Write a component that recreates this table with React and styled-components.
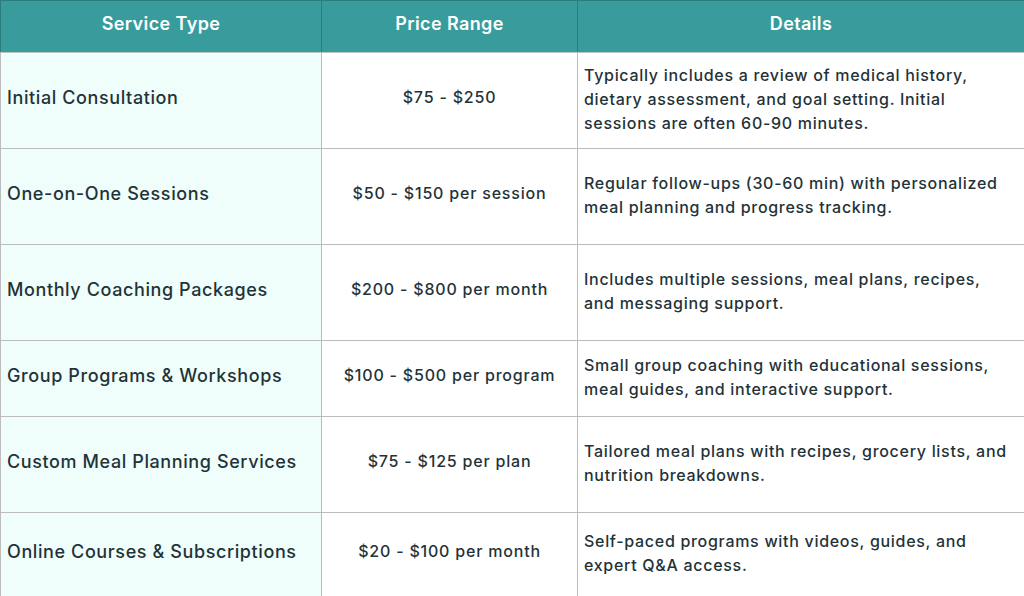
import React from "react";
import styled, { createGlobalStyle } from "styled-components";

const GlobalStyle = createGlobalStyle`
  html, body {
    margin: 0;
    padding: 0;
    background: #ffffff;
  }
  body {
    font-family: Inter, "Open Sans", sans-serif;
    color: #1f3338;
  }
`;

const rows = [
  {
    service: "Initial Consultation",
    price: "$75 - $250",
    details: [
      "Typically includes a review of medical history,",
      "dietary assessment, and goal setting. Initial",
      "sessions are often 60-90 minutes.",
    ],
    height: 96,
  },
  {
    service: "One-on-One Sessions",
    price: "$50 - $150 per session",
    details: [
      "Regular follow-ups (30-60 min) with personalized",
      "meal planning and progress tracking.",
    ],
    height: 96,
  },
  {
    service: "Monthly Coaching Packages",
    price: "$200 - $800 per month",
    details: [
      "Includes multiple sessions, meal plans, recipes,",
      "and messaging support.",
    ],
    height: 96,
  },
  {
    service: "Group Programs & Workshops",
    price: "$100 - $500 per program",
    details: [
      "Small group coaching with educational sessions,",
      "meal guides, and interactive support.",
    ],
    height: 76,
  },
  {
    service: "Custom Meal Planning Services",
    price: "$75 - $125 per plan",
    details: [
      "Tailored meal plans with recipes, grocery lists, and",
      "nutrition breakdowns.",
    ],
    height: 96,
  },
  {
    service: "Online Courses & Subscriptions",
    price: "$20 - $100 per month",
    details: [
      "Self-paced programs with videos, guides, and",
      "expert Q&A access.",
    ],
    height: 84,
  },
];

const PriceTable = styled.table`
  width: 1024px;
  border-collapse: collapse;
  table-layout: fixed;
`;

const HeadCell = styled.th`
  height: 44px;
  padding: 0 8px 7px;
  background: #379c9b;
  color: #ffffff;
  font-size: 18px;
  font-weight: 600;
  letter-spacing: 0.4px;
  text-align: center;
  border: 1px solid #2b7c7b;
  border-bottom: 1px solid #b9c4c4;
`;

const Row = styled.tr`
  height: ${(p) => p.$h}px;
`;

const ServiceCell = styled.td`
  padding: 0 6px 7px;
  background: #effefb;
  font-size: 18px;
  font-weight: 500;
  letter-spacing: 0.6px;
  white-space: nowrap;
  border: 1px solid #bcbcbc;
  vertical-align: middle;
`;

const PriceCell = styled.td`
  padding: 0 6px 7px;
  font-size: 16px;
  font-weight: 500;
  letter-spacing: 0.8px;
  text-align: center;
  white-space: nowrap;
  border: 1px solid #bcbcbc;
  vertical-align: middle;
`;

const DetailCell = styled.td`
  padding: 0 6px 4px;
  font-size: 16px;
  font-weight: 500;
  letter-spacing: 0.7px;
  line-height: 24px;
  white-space: nowrap;
  border: 1px solid #bcbcbc;
  vertical-align: middle;
`;

const Line = styled.span`
  display: block;
`;

export default function App() {
  return (
    <>
      <GlobalStyle />
      <PriceTable>
        <colgroup>
          <col style={{ width: 321 }} />
          <col style={{ width: 256 }} />
          <col style={{ width: 447 }} />
        </colgroup>
        <thead>
          <tr>
            <HeadCell>Service Type</HeadCell>
            <HeadCell>Price Range</HeadCell>
            <HeadCell>Details</HeadCell>
          </tr>
        </thead>
        <tbody>
          {rows.map((r) => (
            <Row key={r.service} $h={r.height}>
              <ServiceCell>{r.service}</ServiceCell>
              <PriceCell>{r.price}</PriceCell>
              <DetailCell>
                {r.details.map((line) => (
                  <Line key={line}>{line}</Line>
                ))}
              </DetailCell>
            </Row>
          ))}
        </tbody>
      </PriceTable>
    </>
  );
}
